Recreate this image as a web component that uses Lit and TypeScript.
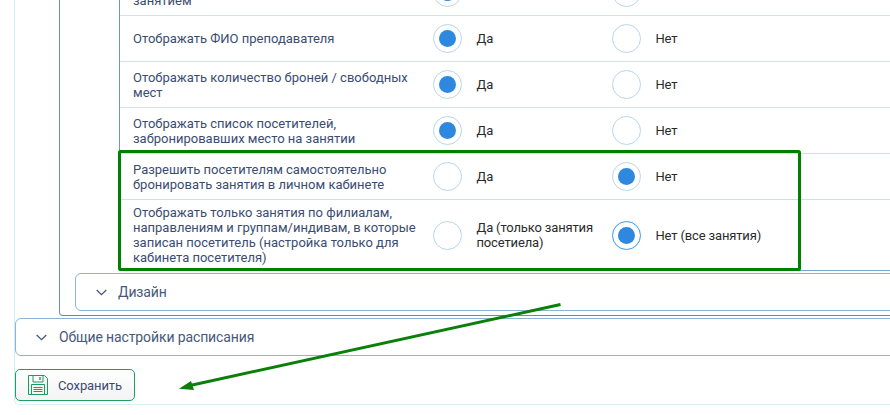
import { LitElement, html, css, svg } from "lit";
import { customElement } from "lit/decorators.js";

interface Row { label: unknown; a: unknown; b: unknown; yes: boolean; focus?: boolean; }

const rows: Row[] = [
  { label: html`Отображать сведения перед<br />занятием`, a: "Да", b: "Нет", yes: true },
  { label: "Отображать ФИО преподавателя", a: "Да", b: "Нет", yes: true },
  { label: "Отображать количество броней / свободных мест", a: "Да", b: "Нет", yes: true },
  { label: "Отображать список посетителей, забронировавших место на занятии", a: "Да", b: "Нет", yes: true },
  { label: "Разрешить посетителям самостоятельно бронировать занятия в личном кабинете", a: "Да", b: "Нет", yes: false },
  {
    label: "Отображать только занятия по филиалам, направлениям и группам/индивам, в которые записан посетитель (настройка только для кабинета посетителя)",
    a: "Да (только занятия посетиела)", b: "Нет (все занятия)", yes: false, focus: true,
  },
];

const chevron = svg`<svg class="chev" width="11" height="7" viewBox="0 0 11 7"><path d="M0.7 1 L5.5 5.6 L10.3 1" fill="none" stroke="#46597a" stroke-width="1.3"/></svg>`;

@customElement("app-root")
export class AppRoot extends LitElement {
  static styles = css`
    :host { display: block; position: relative; width: 890px; height: 415px; overflow: hidden; background: #fff;
      font-family: Roboto, "Liberation Sans", sans-serif; font-size: 13px; line-height: 15px; color: #3a4c72; }
    .outer { width: 1000px; margin-left: 14px; margin-top: -30px; border-left: 1px solid #d3ecfb; border-bottom: 1px solid #d9eef9;
      border-bottom-left-radius: 5px; padding-bottom: 3px; }
    .container { margin-left: 44px; border-left: 1px solid #5f93c0; border-bottom: 1px solid #4a90d4;
      border-bottom-left-radius: 4px; padding-bottom: 4px; margin-bottom: 2px; }
    .panel { margin-left: 59px; border-left: 1px solid #6a9cc5; border-bottom: 1px solid #7aa6c9; margin-bottom: 2px; }
    .row { display: grid; grid-template-columns: 300px 179px 1fr; align-items: center; min-height: 45px; box-sizing: content-box;
      padding-left: 13px; border-bottom: 1px solid #d5e3ec; }
    .row.hl { border-bottom-color: #c9e0ef; }
    .row.tall { padding: 5px 0 5px 13px; border-bottom: 0; }
    .label { padding-right: 14px; }
    .opt { display: flex; align-items: center; gap: 14.5px; color: #2a2a2a; padding-right: 12px; letter-spacing: -0.15px; }
    .radio { flex: none; width: 29px; height: 29px; box-sizing: border-box; border: 1px solid #b7d6e9; border-radius: 50%;
      display: flex; align-items: center; justify-content: center; background: #fff; }
    .radio.focus { border-color: #2f9bf0; }
    .dot { width: 17px; height: 17px; border-radius: 50%; background: #2f88df; }
    .acc { display: flex; align-items: center; height: 36px; border: 1px solid #8db4d4; border-radius: 6px; font-size: 14px; color: #46597a; letter-spacing: -0.12px; }
    .acc.inner { margin-left: 15px; padding-left: 20px; gap: 11px; }
    .acc.main { padding-left: 20px; gap: 12px; }
    .chev { flex: none; }
    .btn { display: inline-flex; align-items: center; gap: 10px; width: 120px; height: 32px; box-sizing: border-box; margin-top: 13px;
      padding-left: 12px; border: 1px solid #1f9d62; border-radius: 5px; background: linear-gradient(#fff, #f3f3f3); color: #3a4c72; letter-spacing: -0.1px; }
    .btn svg { flex: none; }
    .overlay { position: absolute; left: 0; top: 0; pointer-events: none; }
  `;

  private opt(text: unknown, on: boolean, focus: boolean) {
    return html`<div class="opt">
      <span class="radio ${focus ? "focus" : ""}">${on ? html`<span class="dot"></span>` : ""}</span>
      <span>${text}</span>
    </div>`;
  }

  render() {
    return html`
      <div class="outer">
        <div class="container">
          <div class="panel">
            ${rows.map((r, i) => html`
              <div class="row ${i >= 3 ? "hl" : ""} ${i === 5 ? "tall" : ""}">
                <div class="label">${r.label}</div>
                ${this.opt(r.a, r.yes, false)}
                ${this.opt(r.b, !r.yes, !!r.focus)}
              </div>`)}
          </div>
          <div class="acc inner">${chevron}<span>Дизайн</span></div>
        </div>
        <div class="acc main">${chevron}<span>Общие настройки расписания</span></div>
        <div class="btn">
          <svg width="20" height="20" viewBox="0 0 20 20" fill="none" stroke="#14a05a" stroke-width="1">
            <path d="M0.5 0.5 H16.5 L19.5 3.5 V19.5 H0.5 Z" />
            <path d="M5 0.5 V7 H15 V0.5" />
            <path d="M12 2 V5" stroke-width="1.4" />
            <path d="M3.5 19.5 V9.5 H16.5 V19.5" />
            <path d="M5.5 12.5 H14.5 M5.5 14.5 H14.5 M5.5 16.5 H14.5" />
          </svg>
          <span>Сохранить</span>
        </div>
      </div>
      <svg class="overlay" width="890" height="415" viewBox="0 0 890 415">
        <rect x="119.5" y="151.5" width="680" height="118" rx="1" fill="none" stroke="#008000" stroke-width="3" />
        <path d="M560.5 304.5 L190 385.5" stroke="#0a800a" stroke-width="3" fill="none" />
        <path d="M179 388.8 L191 381 L194 390 Z" fill="#0a800a" />
      </svg>
    `;
  }
}
